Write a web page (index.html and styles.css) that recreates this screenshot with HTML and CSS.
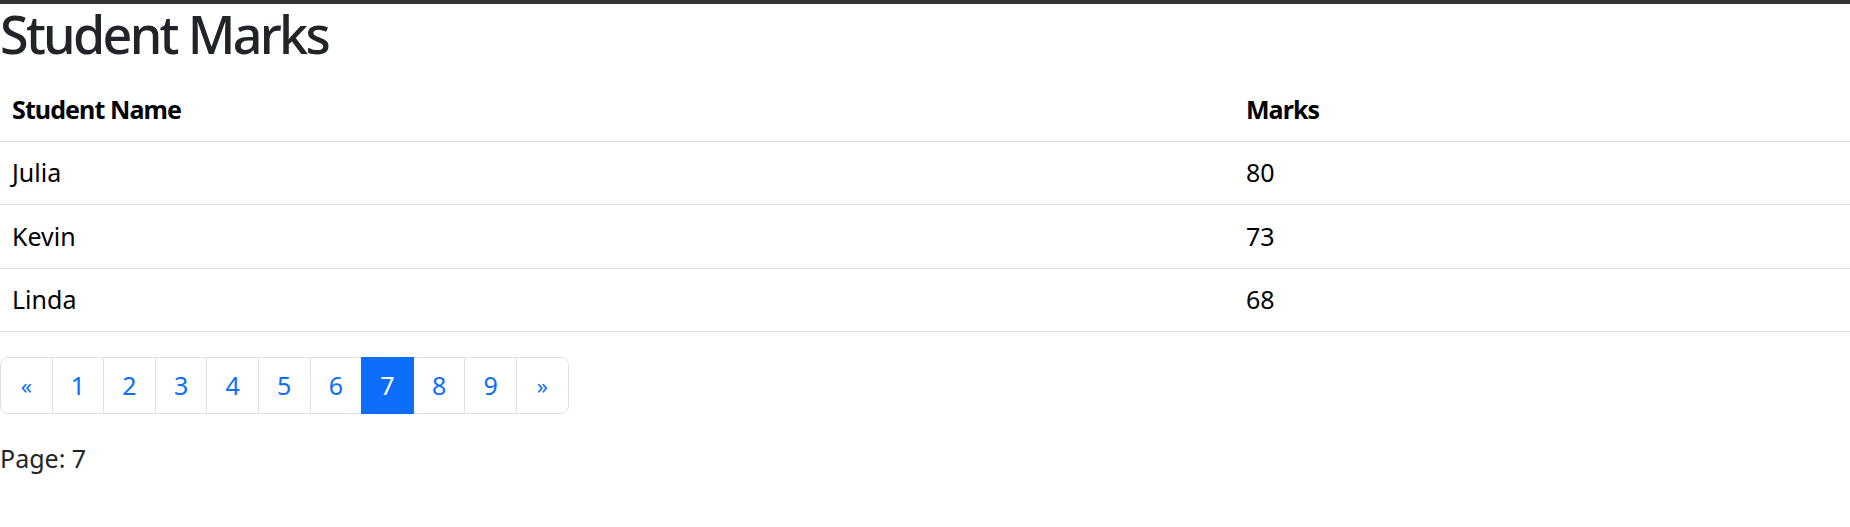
FILE: index.html
```html
<!DOCTYPE html>
<html lang="en">
<head>
<meta charset="utf-8">
<title>Student Marks</title>
<link rel="stylesheet" href="styles.css">
</head>
<body>
<div class="topbar"></div>
<h1 class="title">Student Marks</h1>
<table class="marks">
  <colgroup><col class="col-name"><col class="col-marks"></colgroup>
  <thead>
    <tr><th>Student Name</th><th>Marks</th></tr>
  </thead>
  <tbody>
    <tr><td>Julia</td><td>80</td></tr>
    <tr><td>Kevin</td><td>73</td></tr>
    <tr><td>Linda</td><td>68</td></tr>
  </tbody>
</table>
<ul class="pagination">
  <li class="page-item"><a class="page-link small" href="#">«</a></li>
  <li class="page-item"><a class="page-link" href="#">1</a></li>
  <li class="page-item"><a class="page-link" href="#">2</a></li>
  <li class="page-item"><a class="page-link" href="#">3</a></li>
  <li class="page-item"><a class="page-link" href="#">4</a></li>
  <li class="page-item"><a class="page-link" href="#">5</a></li>
  <li class="page-item"><a class="page-link" href="#">6</a></li>
  <li class="page-item active"><a class="page-link" href="#">7</a></li>
  <li class="page-item"><a class="page-link" href="#">8</a></li>
  <li class="page-item"><a class="page-link" href="#">9</a></li>
  <li class="page-item"><a class="page-link small" href="#">»</a></li>
</ul>
<p class="page-info">Page: 7</p>
</body>
</html>
```

FILE: styles.css
```css
html, body {
  margin: 0;
  padding: 0;
  background: #fff;
}

body {
  font-family: "Noto Sans", "Open Sans", sans-serif;
  font-size: 25px;
  line-height: 37.5px;
  color: #212529;
}

.topbar {
  height: 4px;
  background: #333333;
}

.title {
  margin: 0 0 14.3px;
  font-size: 52px;
  line-height: 60px;
  font-weight: 500;
  letter-spacing: -2.7px;
  color: #212529;
}

.marks {
  width: 100%;
  border-collapse: collapse;
  margin: 0 0 25px;
  color: #000;
}

.col-name { width: 66.7%; }
.col-marks { width: 33.3%; }

.marks th,
.marks td {
  text-align: left;
  padding: 12.5px 12px;
  line-height: 37.5px;
  font-size: 25px;
  border-bottom: 1px solid #dee2e6;
  vertical-align: top;
}

.marks th {
  font-weight: 700;
  letter-spacing: -0.9px;
}

.pagination {
  display: flex;
  list-style: none;
  margin: 0 0 26px;
  padding: 0;
}

.page-item {
  width: 52.6px;
  flex: 0 0 auto;
  margin-left: -1px;
}

.page-item:first-child {
  margin-left: 0;
}

.page-link {
  display: block;
  box-sizing: border-box;
  padding: 8.75px 0;
  line-height: 37.5px;
  text-align: center;
  color: #0d6efd;
  text-decoration: none;
  background: #fff;
  border: 1px solid #dee2e6;
  font-size: 25px;
}

.page-link.small {
  font-size: 22px;
}

.page-item:first-child .page-link {
  border-radius: 8px 0 0 8px;
}

.page-item:last-child .page-link {
  border-radius: 0 8px 8px 0;
}

.page-item.active .page-link {
  position: relative;
  z-index: 1;
  background: #0d6efd;
  border-color: #0d6efd;
  color: #fff;
}

.page-info {
  margin: 0;
  font-size: 25px;
  line-height: 37.5px;
  color: #212529;
}
```
